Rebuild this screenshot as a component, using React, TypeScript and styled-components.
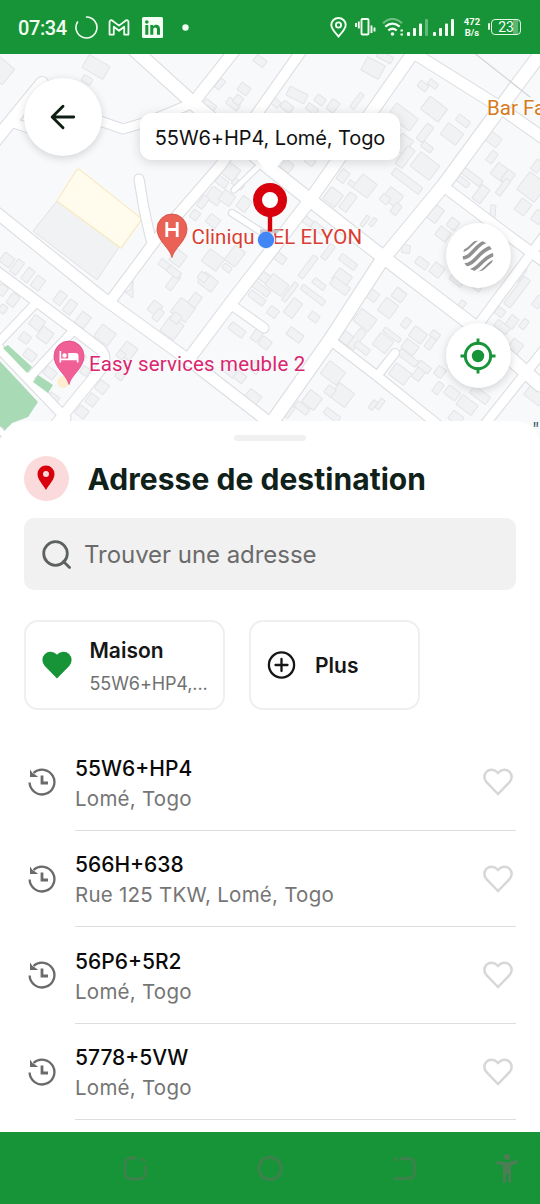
import React from "react";
import styled, { createGlobalStyle } from "styled-components";

const GREEN = "#189438";
const RED = "#d8000d";

const GlobalStyle = createGlobalStyle`
  *, *::before, *::after { box-sizing: border-box; }
  body { margin: 0; background: #fff; font-family: Inter, "Liberation Sans", sans-serif; }
  svg { display: block; flex: none; }
`;

const Screen = styled.div`
  width: 540px;
  height: 1204px;
  display: flex;
  flex-direction: column;
  overflow: hidden;
  background: #fff;
`;

/* ---------- status bar ---------- */

const StatusBar = styled.header`
  height: 54px;
  flex: none;
  display: flex;
  align-items: center;
  justify-content: space-between;
  padding: 0 18px;
  background: ${GREEN};
  color: #f2fff2;
  font-family: Roboto, sans-serif;
`;

const StatusGroup = styled.div`
  display: flex;
  align-items: center;
`;

const Clock = styled.span`
  width: 57px;
  font-size: 20px;
  font-weight: 500;
  line-height: 24px;
  letter-spacing: -0.4px;
  padding-top: 2px;
`;

const Glyph = styled.span<{ $gap?: number }>`
  margin-left: ${(p) => p.$gap ?? 0}px;
`;

const NetSpeed = styled.span`
  width: 18px;
  margin-left: 8px;
  font-size: 9.5px;
  font-weight: 700;
  line-height: 11.5px;
  text-align: center;
`;

const Battery = styled.span`
  position: relative;
  width: 30px;
  height: 16px;
  margin-left: 10px;
  margin-right: 1px;
  border: 1.5px solid #e3f7e3;
  border-radius: 4px;
  font-size: 14px;
  line-height: 14px;
  text-align: center;
  background: linear-gradient(to left, transparent 2px, #5cb574 2px, #5cb574 7px, transparent 7px);
  &::before {
    content: "";
    position: absolute;
    left: -4px;
    top: 3px;
    width: 2px;
    height: 7px;
    border-radius: 1px;
    background: #e3f7e3;
  }
`;

const Signal = ({ weak }: { weak?: boolean }) => (
  <svg width="23" height="18" viewBox="0 0 23 18" fill="#f2fff2">
    <rect x="1" y="14" width="3" height="4" rx="1" />
    <rect x="7" y="10" width="3" height="8" rx="1" />
    <rect x="13" y="5.500" width="3" height="12.500" rx="1" />
    <rect x="19" y="1" width="3" height="17" rx="1" opacity={weak ? 0.35 : 1} />
  </svg>
);

const Status = () => (
  <StatusBar>
    <StatusGroup>
      <Clock>07:34</Clock>
      <svg width="23" height="23" viewBox="0 0 23 23" fill="none" stroke="#f2fff2" strokeWidth="1.600" strokeLinecap="round">
        <path d="M11.500 1A10.500 10.500 0 1 1 2.500 6" />
      </svg>
      <Glyph $gap={10}>
        <svg width="22" height="17" viewBox="0 0 23 18" fill="none" stroke="#f2fff2" strokeWidth="1.900" strokeLinejoin="round">
          <path d="M1.500 16.500V3.200Q1.700 .6 4.200 1.500L11.500 7 18.800 1.500Q21.300.6 21.500 3.200V16.500H17V8.200L11.500 12.500 6 8.200V16.500Z" />
        </svg>
      </Glyph>
      <Glyph $gap={12}>
        <svg width="21" height="21" viewBox="0 0 21 21">
          <rect width="21" height="21" rx="1.500" fill="#f2fff2" />
          <g fill={GREEN}>
            <circle cx="4.800" cy="5" r="1.800" />
            <rect x="3.300" y="8" width="3" height="9.800" />
            <path d="M8.300 8h2.900v1.400c1.400-2.500 6.800-2.400 6.800 2.500v5.900h-3v-5.200c0-3-3.700-2.700-3.700 0v5.200h-3Z" />
          </g>
        </svg>
      </Glyph>
      <Glyph $gap={19}>
        <svg width="7" height="7"><circle cx="3.500" cy="3.500" r="3.200" fill="#f2fff2" /></svg>
      </Glyph>
    </StatusGroup>
    <StatusGroup>
      <svg width="17" height="21" viewBox="0 0 17 21" fill="none" stroke="#f2fff2" strokeWidth="1.900">
        <path d="M8.500 19.500C5 15.500 1.300 11.800 1.300 8a7.200 7 0 0 1 14.400 0c0 3.800-3.700 7.500-7.200 11.500Z" />
        <circle cx="8.500" cy="8" r="2.600" />
      </svg>
      <Glyph $gap={8}>
        <svg width="21" height="20" viewBox="0 0 21 20" fill="none" stroke="#f2fff2" strokeWidth="1.900">
          <rect x="6.500" y="2" width="7" height="15.500" rx="1" />
          <path d="M3.800 4.500v7M1 6v4M16.500 8.500v7.500M19.500 10.500v4" />
        </svg>
      </Glyph>
      <Glyph $gap={6}>
        <svg width="23" height="18" viewBox="0 0 23 18" fill="none" stroke="#f2fff2" strokeWidth="2.200">
          <path d="M1 5.200q9.500-8.500 19 0" opacity=".4" />
          <path d="M3.300 8.700q7.200-6 14.400 0M6.300 12.500q4.200-3.500 8.400 0" />
          <circle cx="10.500" cy="16" r="1.800" fill="#f2fff2" stroke="none" />
          <path d="M18.500 12.500h2.400M18.500 16.500h2.400" strokeWidth="1.800" />
        </svg>
      </Glyph>
      <Glyph $gap={1}><Signal weak /></Glyph>
      <Glyph $gap={3}><Signal /></Glyph>
      <NetSpeed>472 B/s</NetSpeed>
      <Battery>23</Battery>
    </StatusGroup>
  </StatusBar>
);

/* ---------- map ---------- */

const MapArea = styled.section`
  position: relative;
  height: 394px;
  flex: none;
  overflow: hidden;
  background: #f8f9fb;
`;

const MapLabel = styled.span<{ $x: number; $y: number; $color: string; $spacing?: number }>`
  position: absolute;
  left: ${(p) => p.$x}px;
  top: ${(p) => p.$y}px;
  color: ${(p) => p.$color};
  font-family: Roboto, sans-serif;
  font-size: 20.5px;
  line-height: 24px;
  white-space: nowrap;
  letter-spacing: ${(p) => p.$spacing ?? 0}px;
  text-shadow: 0 0 2px #fff, 0 0 2px #fff;
`;

const MarkerLayer = styled.svg`
  position: absolute;
  inset: 0;
`;

const RoundButton = styled.button<{ $x: number; $y: number; $size: number }>`
  position: absolute;
  left: ${(p) => p.$x}px;
  top: ${(p) => p.$y}px;
  width: ${(p) => p.$size}px;
  height: ${(p) => p.$size}px;
  padding: 0;
  border: 0;
  border-radius: 50%;
  background: #fff;
  box-shadow: 0 2px 9px rgba(0, 0, 0, 0.16);
  display: flex;
  align-items: center;
  justify-content: center;
`;

const Tooltip = styled.div`
  position: absolute;
  left: 140px;
  top: 59px;
  width: 260px;
  height: 47px;
  border-radius: 12px;
  background: #fff;
  box-shadow: 0 2px 12px rgba(0, 0, 0, 0.15);
  color: #111;
  font-size: 20px;
  letter-spacing: -0.1px;
  line-height: 50px;
  text-align: center;
  white-space: nowrap;
  &::after {
    content: "";
    position: absolute;
    left: 117px;
    top: 46px;
    border: 13px solid transparent;
    border-top: 17px solid #fff;
    border-bottom: 0;
  }
`;

const roads: [number, string][] = [
  [11, "M-8 209L100 296 190 361 270 423"],
  [10, "M-8 268L75 330 101 350Q108 358 100 370L56 424"],
  [9, "M-6 343L57 409 66 418"],
  [8, "M34 305L-4 345"],
  [8, "M73 331L32 375"],
  [9, "M139 179L144 209Q149 232 152 244"],
  [10, "M302 50L220 166 155 241 112 299"],
  [11, "M238 46L193 103"],
  [13, "M128 44L193 103 272 170 310 200 383 257 475 327 540 385"],
  [12, "M-6 142L42 83"],
  [9, "M10 122L60 138 100 121 123 129 150 121 193 103"],
  [12, "M415 50L310 200 230 304 188 360"],
  [13, "M545 48L523 77 443 186 382 260 330 340 268 428"],
  [11, "M412 52L495 104 546 140"],
  [10, "M443 186L505 233 546 263"],
  [9, "M545 235L478 325"],
  [9, "M330 340L377 376 437 424"],
  [8, "M395 353L377 376"],
  [9, "M548 345L482 428"],
  [6, "M232 213L266 235 280 238"],
  [5, "M234 190L262 163"],
  [9, "M230 304L264 328"],
  [5, "M0 430L12 446"],
];

/* centre x, centre y, width, height, rotation */
const buildings: [number, number, number, number, number?][] = [
  [96,67,24,15,30],[87,80,10,7,30],[0,70,22,20,40],[260,61,12,8],[220,84,11,6,-50],[244,89,11,9],[209,106,13,9],[233,104,14,7],[238,100,8,9],
  [230,171,17,14],[222,182,12,8],[215,196,15,14],[203,202,7,13],[213,221,12,10],[238,184,12,7],[227,198,13,12],[244,204,11,13],[195,215,8,9],
  [373,68,20,15,28],[385,57,16,7,28],[297,95,20,10,27],[320,100,10,8],[312,109,12,7],[333,106,9,12],[357,101,5,18],[287,107,12,8],[276,103,8,7],
  [423,86,10,7],[433,84,10,6],[434,109,22,16],[403,117,27,15],[425,133,8,19],[452,134,19,14],[463,121,14,7],[403,144,14,17],[405,157,9,22],[425,166,24,18],[407,181,34,8],[427,147,12,6],
  [287,166,11,10],[310,161,10,7],[343,176,9,12],[352,184,8,5],[365,186,18,17],[333,197,15,15],[348,202,9,19],[393,197,16,14],[396,209,7,11],[385,199,9,8],[365,221,4,12],[373,222,4,9],
  [433,212,17,16],[493,139,15,11],[492,157,7,12],[500,172,14,14],[472,177,23,7],[462,181,16,6],[481,194,10,17],[508,177,9,13],[503,187,6,18],[493,211,5,12,5],[532,187,22,22],[523,207,12,14],[538,217,10,12],[453,224,10,10],[443,234,13,11],[307,221,12,7],[318,228,14,7],[537,166,8,12],
  [7,260,12,11],[17,267,8,15],[28,275,8,14],[38,283,10,13],[60,298,9,13],[70,307,9,14],[83,320,11,14],[105,335,17,15],[128,351,14,15],[121,355,8,7],[2,290,9,10],[13,300,9,12],[3,309,7,8],[37,323,13,12],[45,335,13,13],[25,338,10,9],[30,355,12,9],[50,373,12,9],[80,357,10,9],[53,398,11,8],[102,387,11,11],[92,400,10,11],[82,412,11,10],[122,373,8,14],[85,371,8,8],
  [165,265,13,7],[178,258,13,14],[173,282,7,17],[174,272,14,7],[213,260,18,15],[235,256,13,18],[227,268,9,6],[208,282,17,13],[203,277,9,8],[155,308,11,12],[158,315,7,12],[183,310,18,18],[195,300,9,13],[172,328,17,18],[176,318,9,9],[257,298,18,7],[260,288,22,7],[265,278,16,9],[237,330,17,8],[257,335,8,13],[265,343,11,10],[230,370,15,10],[240,377,11,9],[253,397,14,11],[256,367,9,12],
  [280,258,12,8],[277,285,20,14],[293,308,11,18],[290,292,5,22],[308,267,6,26],[328,252,6,17],[348,262,19,7],[342,278,16,14],[340,286,20,9],[319,284,14,6],[313,295,28,6],[314,317,10,8],[273,312,10,9],[295,335,16,9],
  [406,249,8,8,8],[422,263,13,8],[437,270,12,12],[457,280,14,8],[372,295,12,10],[399,295,12,11],[388,308,15,16],[365,320,19,15],[346,338,11,11],[357,339,8,22],[362,348,16,7],[383,343,16,15],[392,335,20,5],[406,323,7,10],[418,335,15,12],[410,347,15,11],[432,341,7,18],[435,335,9,7],[408,358,22,7],[400,374,19,14],[420,372,9,17],[424,367,14,7],[440,372,9,10],[438,388,7,12],[452,393,14,10],[467,405,19,12],[480,395,20,9],[456,418,13,10],
  [517,292,8,34],[512,322,9,12],[524,324,6,10],[500,312,9,8],[515,347,12,13],[502,327,15,8],[520,274,7,15],[535,395,19,13],[538,302,8,12],[333,373,20,16],[342,395,19,17],[330,391,9,9],[290,397,9,8],[312,400,15,15],[302,408,15,7],[287,410,11,13],[332,415,17,7],[373,405,5,10],[380,404,5,11],[460,307,6,14],[477,286,10,8],
];

const CityMap = () => (
  <svg width="540" height="394" viewBox="0 54 540 394">
    <polygon points="57,201 33,231 97,280 119,247" fill="#f1f2f3" stroke="#e0e2e4" />
    <polygon points="76,171 79,169 142,219 121,248 57,201" fill="#fffcee" stroke="#f9ebc6" strokeWidth="1.300" />
    {buildings.map(([x, y, w, h, a = 37], i) => (
      <rect key={i} x={x - w / 2} y={y - h / 2} width={w} height={h} rx=".8" transform={`rotate(${a} ${x} ${y})`} fill="#f1f2f4" stroke="#e3e4e7" strokeWidth="1" />
    ))}
    <path d="M130 290L133 281V298L125 292Z" fill="#f1f2f4" stroke="#e3e4e7" />
    <g fill="#a8dab5">
      <path d="M-2 359L38 402 28 417 12 423 3 434-2 440Z" />
    </g>
    <g fill="none" strokeLinecap="round" strokeLinejoin="round">
      {roads.map(([w, d], i) => <path key={i} d={d} stroke="#dcdee1" strokeWidth={w + 2.2} />)}
      {roads.map(([w, d], i) => <path key={i} d={d} stroke="#fff" strokeWidth={w} />)}
      <path d="M473 52L530 97" stroke="#d3d4d6" strokeWidth="1.200" />
    </g>
    <g fill="#a8dab5">
      <path d="M3 348L8 345 32 367 27 373Z" />
      <path d="M38 375L53 385 48 393 33 382Z" />
    </g>
    <circle cx="63" cy="382" r="6" fill="#fdeed0" />
  </svg>
);

const Pins = () => (
  <MarkerLayer width="540" height="394" viewBox="0 54 540 394">
    <path d="M172 257.500C170 248 157 241 157 229a15 15 0 0 1 30 0C187 241 174 248 172 257.500Z" fill="#ea6156" stroke="#d7483e" strokeWidth=".8" />
    <path d="M166.800 222v15M177.200 222v15M166.800 229.500h10.400" stroke="#fff" strokeWidth="2.800" />
    <path d="M69 384.500C67 375 54 368 54 356a15 15 0 0 1 30 0C84 368 71 375 69 384.500Z" fill="#f06097" stroke="#de4584" strokeWidth=".8" />
    <g fill="#fff">
      <path d="M59.500 351h1.700v7.500h7V353h7.300q3 0 3 3v6.500h-1.700v-2.300H61.200v2.300h-1.700Z" />
      <circle cx="64.500" cy="355.500" r="2.200" />
    </g>
    <circle cx="266" cy="240" r="9.500" fill="#f4f5f8" opacity=".9" />
    <path d="M260 229.500H281L277 233.500H260Z" fill="#c9c9cb" opacity=".9" />
    <path d="M270 214V231.500" stroke={RED} strokeWidth="4.400" />
    <circle cx="270" cy="200" r="12.500" fill="#fff" stroke={RED} strokeWidth="9" />
    <circle cx="266" cy="240" r="8.200" fill="#4285f4" />
  </MarkerLayer>
);

const MapView = () => (
  <MapArea>
    <CityMap />
    <MapLabel $x={487} $y={42} $color="#d67a1c">Bar Fa</MapLabel>
    <MapLabel $x={191.500} $y={171} $color="#d93d33" $spacing={0.1}>Cliniqu</MapLabel>
    <MapLabel $x={272.500} $y={171} $color="#d93d33" $spacing={0.1}>EL ELYON</MapLabel>
    <MapLabel $x={89} $y={298} $color="#d9266f" $spacing={0.15}>Easy services meuble 2</MapLabel>
    <MapLabel $x={532.500} $y={364} $color="#3c5b66">"</MapLabel>
    <Tooltip>55W6+HP4, Lomé, Togo</Tooltip>
    <Pins />
    <RoundButton $x={24} $y={24} $size={78} aria-label="Retour">
      <svg width="26" height="26" viewBox="0 0 26 26" fill="none" stroke="#0c1f12" strokeWidth="2.900" strokeLinecap="round" strokeLinejoin="round">
        <path d="M23.700 13H2.500M13 2.200L2.200 13 13 23.800" />
      </svg>
    </RoundButton>
    <RoundButton $x={445.500} $y={169} $size={65} aria-label="Calques">
      <svg width="32" height="32" viewBox="0 0 32 32">
        <defs><clipPath id="disc"><circle cx="16" cy="16" r="15.300" /></clipPath></defs>
        <g clipPath="url(#disc)" fill="none" stroke="#919191" strokeWidth="3.600">
          <path d="M0 11C7 11 9 3 17 -1" strokeWidth="2" />
          <path d="M-1 18C10 19 13 4 25 1" />
          <path d="M2 25C14 25 17 9 31 7" />
          <path d="M7 31C18 29 20 17 33 14" />
          <path d="M15 33C22 31 25 23 33 20" strokeWidth="2" />
        </g>
      </svg>
    </RoundButton>
    <RoundButton $x={445.500} $y={269} $size={65} aria-label="Ma position">
      <svg width="36" height="36" viewBox="0 0 36 36" fill="none" stroke={GREEN} strokeWidth="2.900">
        <circle cx="18" cy="18" r="12.700" />
        <circle cx="18" cy="18" r="6.200" fill={GREEN} stroke="none" />
        <path d="M18 .5v6M18 29.500v6M.5 18h6M29.500 18h6" />
      </svg>
    </RoundButton>
  </MapArea>
);

/* ---------- bottom sheet ---------- */

const Sheet = styled.main`
  position: relative;
  height: 711px;
  flex: none;
  margin-top: -27px;
  padding: 14px 24px 0;
  border-radius: 24px 24px 0 0;
  background: #fff;
  overflow: hidden;
`;

const Handle = styled.div`
  width: 72px;
  height: 6px;
  margin: 0 auto;
  border-radius: 3px;
  background: #f0f0f0;
`;

const TitleRow = styled.div`
  display: flex;
  align-items: center;
  height: 46px;
  margin-top: 14px;
`;

const PinBadge = styled.span`
  width: 45px;
  height: 45px;
  border-radius: 50%;
  background: #fadadb;
  display: flex;
  align-items: center;
  justify-content: center;
  padding-right: 1px;
`;

const Title = styled.h1`
  margin: 2px 0 0 18.5px;
  color: #10211a;
  font-size: 30px;
  font-weight: 750;
  letter-spacing: 0.05px;
  line-height: 46px;
  white-space: nowrap;
`;

const SearchBox = styled.div`
  display: flex;
  align-items: center;
  height: 72px;
  margin-top: 17px;
  padding-left: 18px;
  border-radius: 10px;
  background: #f1f1f1;
  color: #6b6b6b;
  font-size: 24px;
  line-height: 30px;
`;

const SearchText = styled.span`
  margin: 2px 0 0 13px;
  letter-spacing: -0.05px;
`;

const Shortcuts = styled.div`
  display: flex;
  gap: 24px;
  margin-top: 30px;
`;

const Card = styled.div<{ $width: number }>`
  display: flex;
  align-items: center;
  width: ${(p) => p.$width}px;
  height: 90px;
  padding: 0 0 0 16px;
  border: 2px solid #efefef;
  border-radius: 14px;
`;

const CardText = styled.div<{ $gap: number; $top: number }>`
  margin-left: ${(p) => p.$gap}px;
  padding-top: ${(p) => p.$top}px;
  white-space: nowrap;
`;

const CardTitle = styled.div`
  color: #161616;
  font-size: 21px;
  font-weight: 600;
  line-height: 30px;
`;

const CardDetail = styled.div`
  margin-top: 3px;
  color: #717171;
  font-size: 18px;
  line-height: 30px;
  letter-spacing: -0.1px;
`;

const PlaceList = styled.ul`
  margin: 24px 0 0;
  padding: 0;
  list-style: none;
`;

const PlaceRow = styled.li`
  display: flex;
  align-items: center;
  height: 96.5px;
  padding-left: 4px;
`;

const PlaceBody = styled.div`
  flex: 1;
  height: 100%;
  margin-left: 19px;
  padding: 19.5px 3px 0 0;
  border-bottom: 1px solid #dedede;
  display: flex;
  justify-content: space-between;
`;

const PlaceName = styled.div`
  color: #0a0a0a;
  font-size: 21px;
  font-weight: 500;
  line-height: 30px;
`;

const PlaceArea = styled.div`
  color: #757575;
  font-size: 20.5px;
  letter-spacing: 0.25px;
  line-height: 30px;
`;

const HeartSlot = styled.span`
  margin-top: 14.5px;
`;

const HistoryIcon = () => (
  <svg width="28" height="28" viewBox="0 0 28 28" fill="none" stroke="#686b68" strokeWidth="2.300">
    <path d="M1.600 14.500A12.400 12.400 0 1 0 5.500 5" />
    <path d="M2 1.500V9h8.200L7 6.500 4.500 5Z" fill="#686b68" stroke="none" />
    <path d="M14 7.500v7.500h6" strokeWidth="2.800" />
  </svg>
);

const HEART = "M15 26L3.500 14.200C.6 11.100.7 6.600 3.600 3.700 6.600.8 11.300 1 15 5 18.700 1 23.400.8 26.400 3.700 29.300 6.600 29.400 11.100 26.500 14.200Z";

const places = [
  ["55W6+HP4", "Lomé, Togo"],
  ["566H+638", "Rue 125 TKW, Lomé, Togo"],
  ["56P6+5R2", "Lomé, Togo"],
  ["5778+5VW", "Lomé, Togo"],
];

const DestinationSheet = () => (
  <Sheet>
    <Handle />
    <TitleRow>
      <PinBadge>
        <svg width="18" height="26" viewBox="0 0 18 26">
          <path fillRule="evenodd" d="M9 25C5.500 19 .5 14.500.5 9a8.500 8.500 0 0 1 17 0C17.500 14.500 12.500 19 9 25ZM9 6a3 3 0 1 0 0 6 3 3 0 0 0 0-6Z" fill={RED} />
        </svg>
      </PinBadge>
      <Title>Adresse de destination</Title>
    </TitleRow>
    <SearchBox>
      <svg width="29" height="29" viewBox="0 0 29 29" fill="none" stroke="#5d625f" strokeWidth="2.800">
        <circle cx="13.500" cy="13.500" r="11.800" />
        <path d="M21.500 21.500L27.500 27.500" strokeLinecap="round" />
      </svg>
      <SearchText>Trouver une adresse</SearchText>
    </SearchBox>
    <Shortcuts>
      <Card $width={201}>
        <svg width="30" height="28" viewBox="0 0 30 28"><path d={HEART} fill={GREEN} stroke={GREEN} strokeWidth="2" /></svg>
        <CardText $gap={17.500} $top={5}>
          <CardTitle>Maison</CardTitle>
          <CardDetail>55W6+HP4,...</CardDetail>
        </CardText>
      </Card>
      <Card $width={171}>
        <svg width="29" height="28" viewBox="0 0 28 28" fill="none" stroke="#161616" strokeWidth="2.300">
          <circle cx="14" cy="14" r="12.600" />
          <path d="M14 8v12M8 14h12" strokeLinecap="round" />
        </svg>
        <CardText $gap={19} $top={1}><CardTitle>Plus</CardTitle></CardText>
      </Card>
    </Shortcuts>
    <PlaceList>
      {places.map(([name, area]) => (
        <PlaceRow key={name}>
          <HistoryIcon />
          <PlaceBody>
            <div>
              <PlaceName>{name}</PlaceName>
              <PlaceArea>{area}</PlaceArea>
            </div>
            <HeartSlot>
              <svg width="30" height="28" viewBox="0 0 30 28"><path d={HEART} fill="none" stroke="#d5d8d6" strokeWidth="2.500" /></svg>
            </HeartSlot>
          </PlaceBody>
        </PlaceRow>
      ))}
    </PlaceList>
  </Sheet>
);

/* ---------- system navigation ---------- */

const NavBar = styled.nav`
  display: flex;
  flex: none;
  height: 72px;
  padding: 0 18px 0 120px;
  align-items: center;
  justify-content: space-between;
  background: ${GREEN};
`;

const NavMain = styled.div`
  display: flex;
  gap: 105px;
`;

const NAV = "#3d824d";

const SystemNav = () => (
  <NavBar>
    <NavMain>
      <svg width="30" height="30" viewBox="0 0 30 30" fill="none" stroke={NAV} strokeWidth="2.800">
        <path d="M17 5H12Q4.800 5 4.800 12V19Q4.800 26 12 26H19Q25.500 26 25.500 19V12M21 5L25 9" />
      </svg>
      <svg width="30" height="30" viewBox="0 0 30 30" fill="none" stroke={NAV} strokeWidth="3">
        <circle cx="15" cy="15.500" r="11.200" />
      </svg>
      <svg width="30" height="30" viewBox="0 0 30 30" fill="none" stroke={NAV} strokeWidth="2.800">
        <path d="M4 8L7 5M10 5.500H18Q24.500 5.500 24.500 12V19Q24.500 25.500 18 25.500H4" />
      </svg>
    </NavMain>
    <svg width="30" height="32" viewBox="0 0 30 32" fill="#4d7d55">
      <circle cx="15" cy="5" r="3" />
      <path d="M4 9L15 10.500 26 8V11L19 13.500V30.500H16.200V22H13.800V30.500H11V13.500L4 11.500Z" />
    </svg>
  </NavBar>
);

export default function App() {
  return (
    <Screen>
      <GlobalStyle />
      <Status />
      <MapView />
      <DestinationSheet />
      <SystemNav />
    </Screen>
  );
}
